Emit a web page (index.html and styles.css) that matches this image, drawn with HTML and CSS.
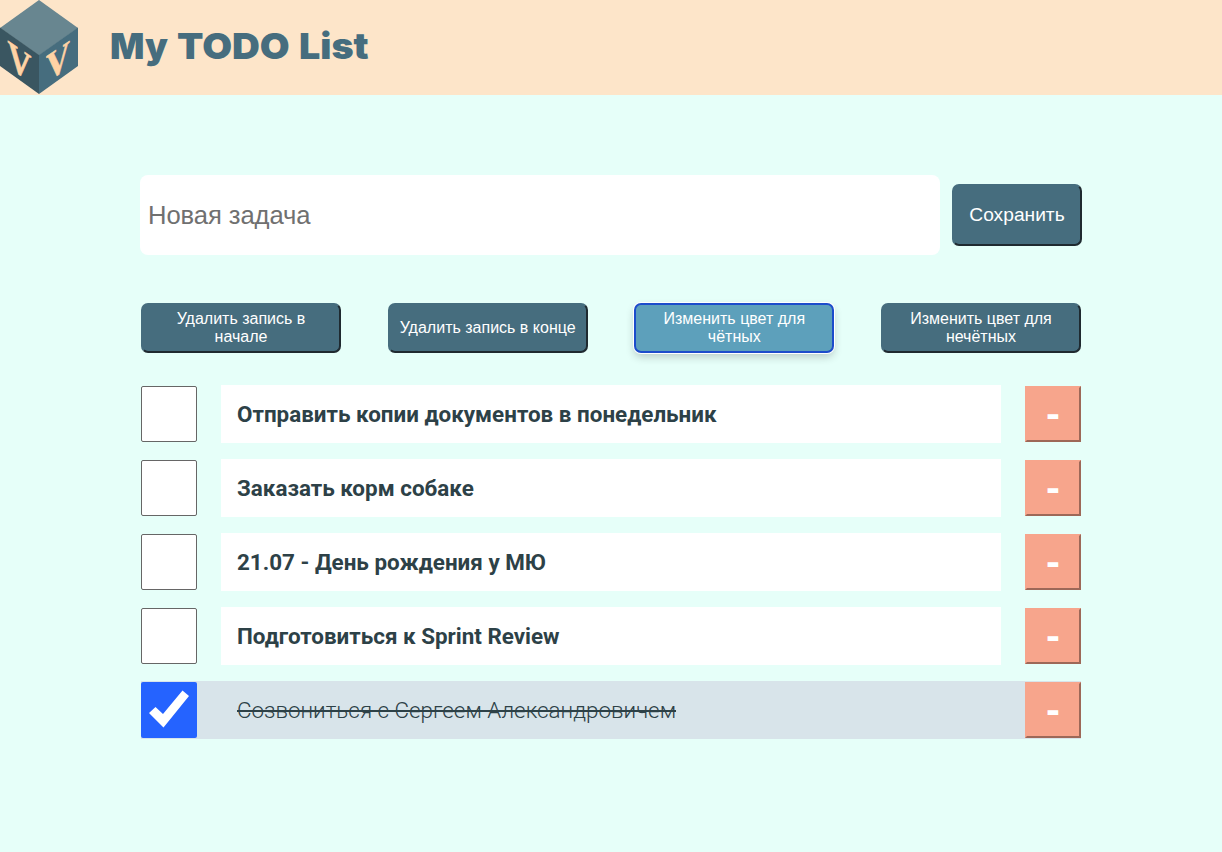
FILE: index.html
```html
<!DOCTYPE html>
<html lang="ru">
<head>
<meta charset="utf-8">
<title>My TODO List</title>
<link rel="stylesheet" href="styles.css">
</head>
<body>
<header class="header">
  <svg class="logo" width="78" height="95" viewBox="0 0 78 95" aria-hidden="true">
    <path fill="#688690" d="M39 0 78 28 39 55.500 0 28Z"/>
    <path fill="#3a5661" d="M0 27.500 39 55v39L0 66Z"/>
    <path fill="#466d7e" d="M78 27.500 39 55v39l39-28Z"/>
    <text class="logo-letter" transform="matrix(1 .67 0 1.200 7.500 66.500)">V</text>
    <text class="logo-letter" transform="matrix(1 -.67 0 1.200 46 82.500)">V</text>
  </svg>
  <h1 class="title"><span class="w-my">My</span><span class="w-todo">TODO</span><span class="w-list">List</span></h1>
</header>
<main class="main">
  <form class="new-task">
    <input class="task-input" type="text" placeholder="Новая задача">
    <button class="btn save" type="button">Сохранить</button>
  </form>
  <div class="actions">
    <button class="btn action" type="button">Удалить запись в начале</button>
    <button class="btn action" type="button">Удалить запись в конце</button>
    <button class="btn action active" type="button">Изменить цвет для чётных</button>
    <button class="btn action" type="button">Изменить цвет для нечётных</button>
  </div>
  <ul class="list">
    <li class="item"><span class="check"></span><p class="text">Отправить копии документов в понедельник</p><button class="delete" type="button">-</button></li>
    <li class="item"><span class="check"></span><p class="text">Заказать корм собаке</p><button class="delete" type="button">-</button></li>
    <li class="item"><span class="check"></span><p class="text">21.07 - День рождения у МЮ</p><button class="delete" type="button">-</button></li>
    <li class="item"><span class="check"></span><p class="text">Подготовиться к Sprint Review</p><button class="delete" type="button">-</button></li>
    <li class="item done"><span class="check"><svg width="56" height="56" viewBox="0 0 56 56"><path fill="#fff" d="M8 31 14.500 25 22 32 41.500 8.500 48 14 22.500 45.500Z"/></svg></span><p class="text">Созвониться с Сергеем Александровичем</p><button class="delete" type="button">-</button></li>
  </ul>
</main>
</body>
</html>
```
FILE: styles.css
```css
* { box-sizing: border-box; }
body { margin: 0; min-height: 852px; background: #e6fff9; font-family: Roboto, sans-serif; }
.header { display: flex; height: 95px; background: #fde5c9; }
.logo { display: block; flex: none; }
.logo-letter { font: bold 33px "Liberation Serif", serif; fill: #ffd3a5; stroke: #ffd3a5; stroke-width: .5px; }
.title { display: flex; margin: 0 0 0 32px; font: 900 36px/93px Inter, sans-serif; color: #466d7e; }
.title span { transform-origin: left; }
.w-my { width: 66.5px; }
.w-todo { width: 122px; transform: scaleX(1.07); }
.w-list { transform: scaleX(1.045); }
.main { width: 942px; margin: 80px auto 0; }
.new-task { display: flex; align-items: center; gap: 12px; height: 80px; }
.task-input { width: 800px; height: 80px; padding: 0 8px; border: 0; border-radius: 8px; background: #fff; font: 25.6px "Liberation Sans", sans-serif; letter-spacing: -.08px; }
.task-input::placeholder { color: #707070; }
.btn { padding: 1px 6px; border: 2px solid; border-color: #466d7e #1f2a30 #1f2a30 #466d7e; border-radius: 7px; background: #466d7e; color: #fff; font: 16px/18px "Liberation Sans", sans-serif; }
.save { width: 130px; height: 62px; font-size: 19.2px; }
.actions { display: flex; justify-content: space-between; margin: 48px 1px 0; }
.action { width: 200px; height: 50px; }
.active { border-color: #1c4dcb; background: #5da0bb; box-shadow: 0 0 0 1px #fff, 0 4px 8px rgba(0, 0, 0, .2); }
.list { display: grid; gap: 16px; margin: 32px 1px 0; padding: 0; list-style: none; }
.item { display: flex; align-items: center; height: 58px; }
.check { flex: none; width: 56px; height: 56px; border: 1px solid #666; border-radius: 2px; background: #fff; }
.check svg { display: block; }
.text { width: 780px; height: 58px; margin: 0 24px; padding: 0 16px; background: #fff; font-size: 22.42px; font-weight: 700; line-height: 58px; color: #2d4147; }
.delete { width: 56px; height: 56px; padding: 3px 0 0; border: 2px solid; border-color: #f7a58c #9d6858 #9d6858 #f7a58c; background: #f7a58c; color: #fff; font: 900 36px/40px Roboto, sans-serif; }
.done { background: #d8e4ea; }
.done .check { border: 0; background: #2563ff; }
.done .text { background: none; font-size: 22.4px; font-weight: 300; text-decoration: line-through; }
```
